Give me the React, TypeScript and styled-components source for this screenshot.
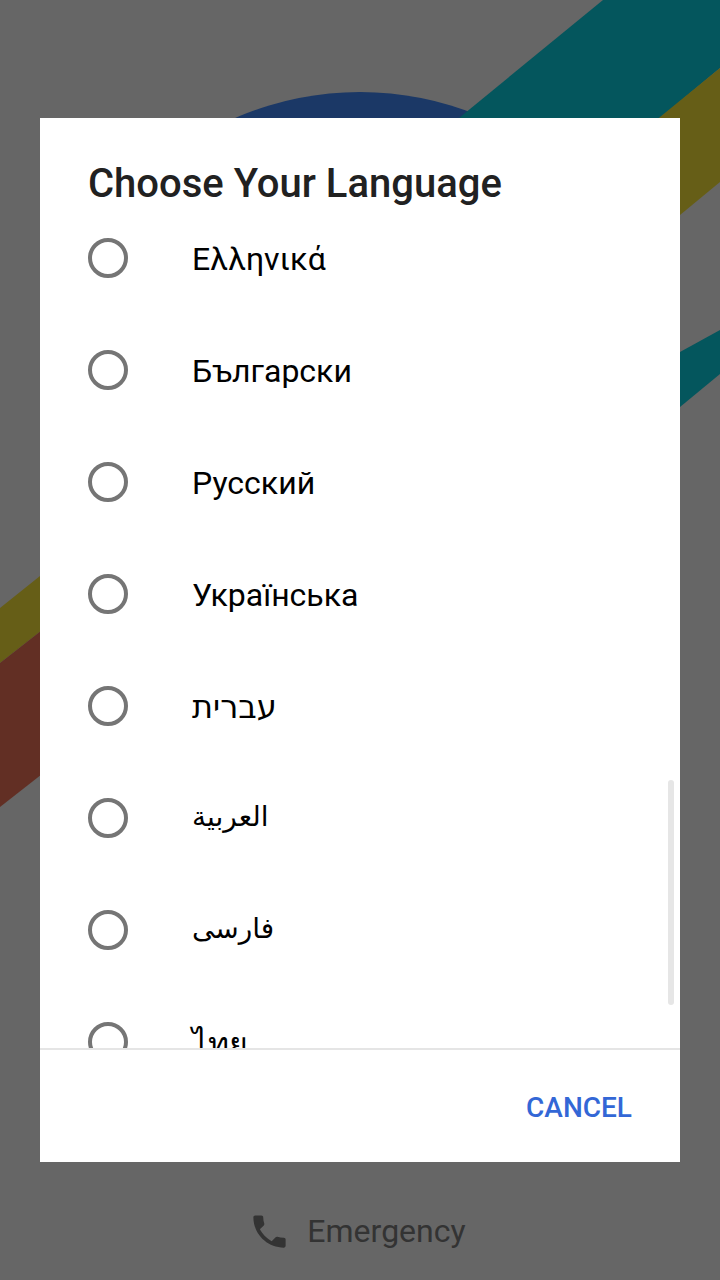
import React from "react"
import styled, { createGlobalStyle } from "styled-components"
import { MdPhone } from "react-icons/md"

interface Language {
    name: string;
    compact?: boolean;
}

const languages: Language[] = [
    { name: "Ελληνικά" },
    { name: "Български" },
    { name: "Русский" },
    { name: "Українська" },
    { name: "עברית" },
    { name: "العربية", compact: true },
    { name: "فارسی", compact: true },
    { name: "ไทย" },
]

const App: React.FC = () => {
    return (
        <Screen>
            <GlobalStyle />
            <Backdrop viewBox="0 0 720 1280" aria-hidden="true">
                <circle cx="360" cy="405" r="313" fill="#1b3866" />
                <polygon points="603,0 720,0 720,68 660,118 459,118" fill="#04565d" />
                <polygon points="720,68 720,182 680,215 600,215 600,166" fill="#665e17" />
                <polygon points="720,330 720,374 680,407 600,407 600,396" fill="#04565d" />
                <polygon points="0,608 60,560 60,616 0,663" fill="#665e17" />
                <polygon points="0,663 60,616 60,760 0,807" fill="#622f24" />
            </Backdrop>
            <Dialog>
                <Title>Choose Your Language</Title>
                <List>
                    {languages.map(language => (
                        <Row key={language.name}>
                            <Radio />
                            <Label $compact={language.compact}>{language.name}</Label>
                        </Row>
                    ))}
                </List>
                <Scrollbar />
                <Actions>
                    <CancelButton>CANCEL</CancelButton>
                </Actions>
            </Dialog>
            <Emergency>
                <MdPhone size={43} color="#333333" />
                <EmergencyText>Emergency</EmergencyText>
            </Emergency>
        </Screen>
    )
}

export default App

const GlobalStyle = createGlobalStyle`
    html, body {
        margin: 0;
        padding: 0;
        background: #666666;
    }
`

const Screen = styled.div`
    position: relative;
    width: 720px;
    height: 1280px;
    padding-top: 118px;
    box-sizing: border-box;
    overflow: hidden;
    background: #666666;
    font-family: Roboto, "Noto Sans", "DejaVu Sans", sans-serif;
`

const Backdrop = styled.svg`
    position: absolute;
    top: 0;
    left: 0;
    width: 720px;
    height: 1280px;
`

const Dialog = styled.div`
    position: relative;
    display: flex;
    flex-direction: column;
    width: 640px;
    height: 1044px;
    margin: 0 auto;
    background: white;
`

const Title = styled.h1`
    height: 84px;
    margin: 0;
    padding: 40px 48px 0;
    box-sizing: border-box;
    font-size: 40px;
    font-weight: 500;
    line-height: 130%;
    color: #212121;
`

const List = styled.div`
    height: 846px;
    overflow: hidden;
`

const Row = styled.div`
    display: flex;
    align-items: center;
    flex-shrink: 0;
    height: 112px;
    padding-left: 48px;
`

const Radio = styled.span`
    width: 40px;
    height: 40px;
    box-sizing: border-box;
    border: 4px solid #757575;
    border-radius: 50%;
`

const Label = styled.span<{ $compact?: boolean }>`
    margin-left: 64px;
    padding-top: ${props => (props.$compact ? "0" : "2px")};
    padding-bottom: ${props => (props.$compact ? "4px" : "0")};
    font-size: ${props => (props.$compact ? "28px" : "32px")};
    color: #000000;
`

const Scrollbar = styled.div`
    position: absolute;
    top: 662px;
    right: 6px;
    width: 6px;
    height: 225px;
    border-radius: 3px;
    background: #e6e6e6;
`

const Actions = styled.div`
    display: flex;
    flex: 1;
    align-items: center;
    justify-content: flex-end;
    padding-right: 48px;
    border-top: 2px solid #e5e5e5;
`

const CancelButton = styled.span`
    padding-top: 2px;
    font-size: 28px;
    font-weight: 500;
    color: #3367d6;
`

const Emergency = styled.div`
    display: flex;
    align-items: center;
    justify-content: center;
    gap: 16px;
    height: 118px;
    padding-top: 20px;
    padding-right: 6px;
    box-sizing: border-box;
`

const EmergencyText = styled.span`
    font-size: 32px;
    color: #333333;
`
